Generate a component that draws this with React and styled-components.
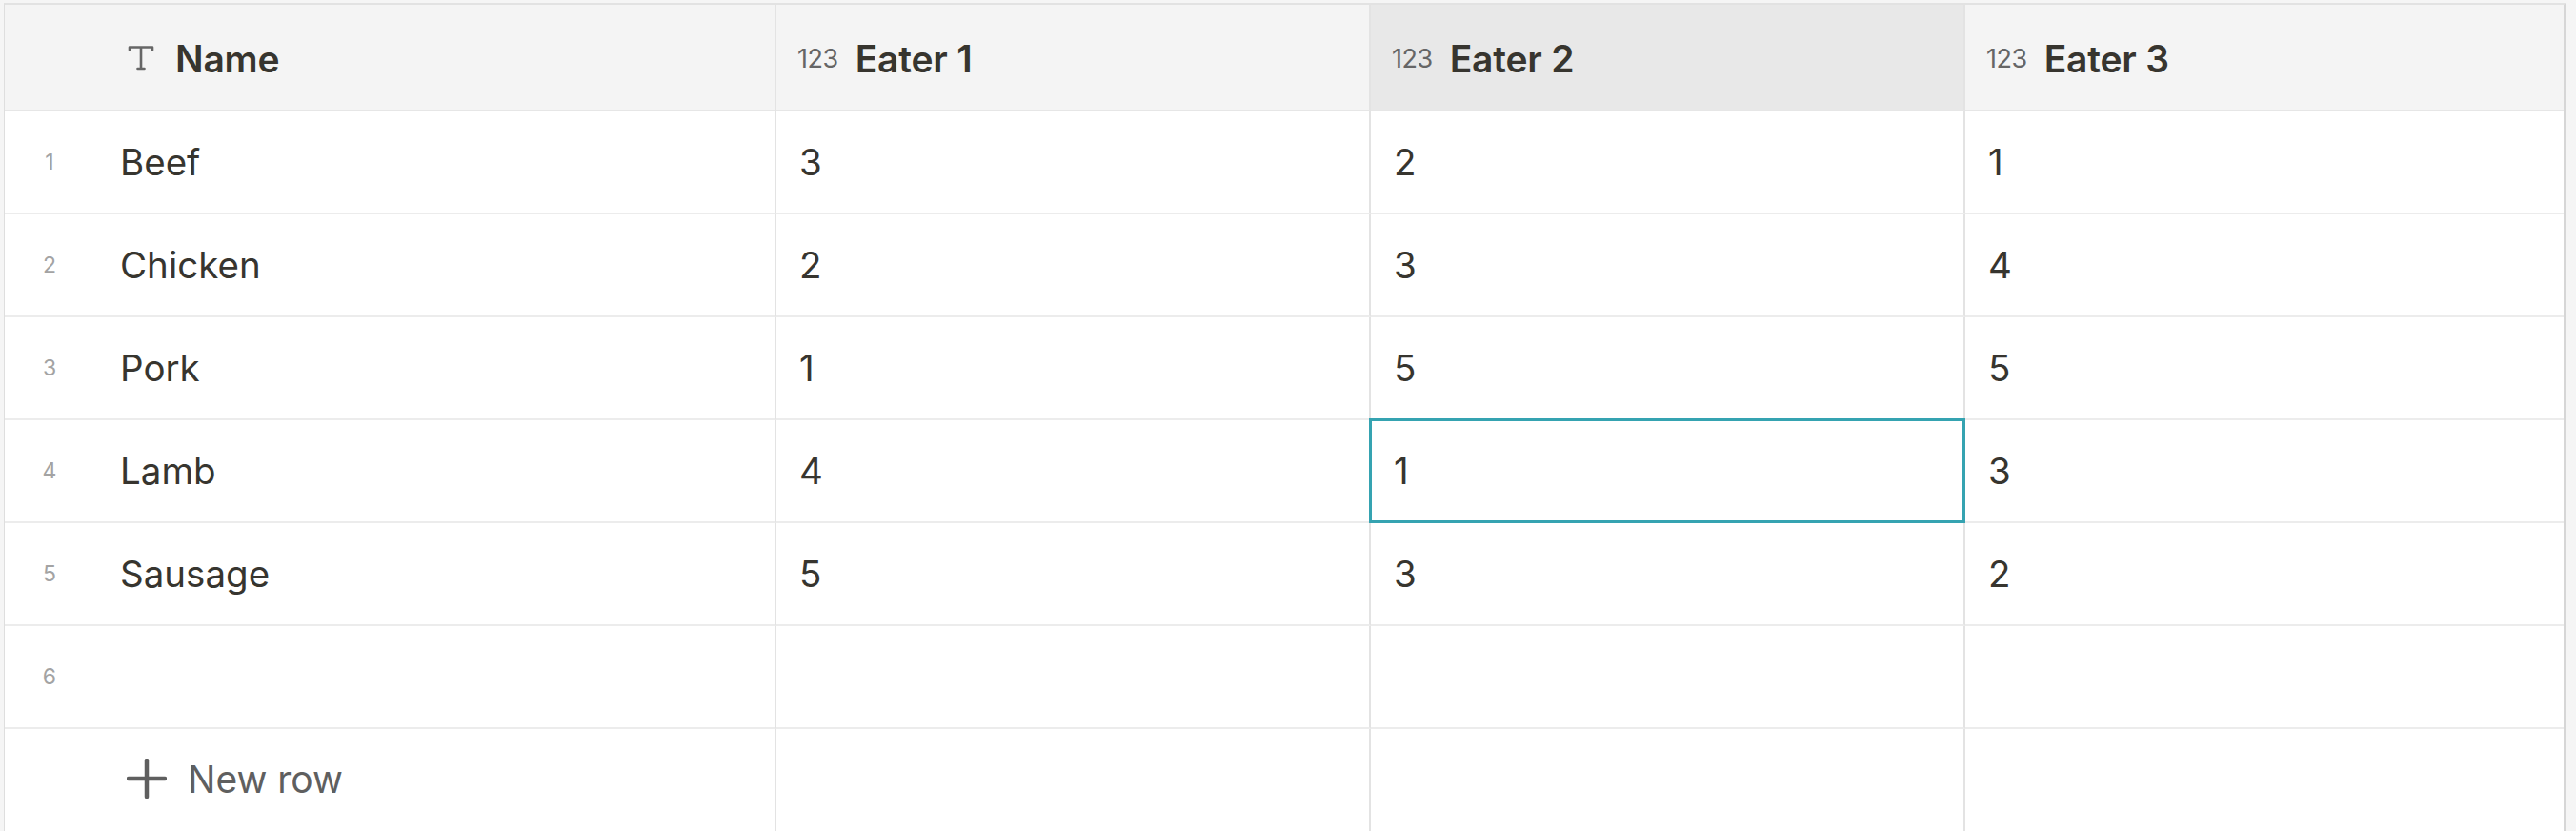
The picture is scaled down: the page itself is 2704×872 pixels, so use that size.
import styled, { createGlobalStyle } from "styled-components";

const GlobalStyle = createGlobalStyle`
  body {
    margin: 0;
    background: #f5f5f5;
    font-family: Inter, "Noto Sans", sans-serif;
  }
`;

const columns = ["Eater 1", "Eater 2", "Eater 3"];

const rows = [
  { name: "Beef", values: [3, 2, 1] },
  { name: "Chicken", values: [2, 3, 4] },
  { name: "Pork", values: [1, 5, 5] },
  { name: "Lamb", values: [4, 1, 3] },
  { name: "Sausage", values: [5, 3, 2] },
  { name: "", values: ["", "", ""] },
];

// selected cell: row 4, Eater 2
const selected = { row: 3, col: 1 };

function TextIcon() {
  return (
    <svg width="30" height="30" viewBox="0 0 30 30" fill="none">
      <path
        d="M3 6.5 V3.5 H27 V6.5 M15 3.5 V26 M11.5 26 H18.5"
        stroke="#666666"
        strokeWidth="2.6"
        strokeLinecap="round"
        strokeLinejoin="round"
      />
    </svg>
  );
}

function PlusIcon() {
  return (
    <svg width="42" height="42" viewBox="0 0 42 42" fill="none">
      <path
        d="M21 2 V40 M2 21 H40"
        stroke="#5f5f5f"
        strokeWidth="4.5"
        strokeLinecap="round"
      />
    </svg>
  );
}

export default function App() {
  return (
    <>
      <GlobalStyle />
      <Page>
        <Table>
          <HeadCell>
            <NameHead>
              <TextIcon />
              <HeadLabel>Name</HeadLabel>
            </NameHead>
          </HeadCell>
          {columns.map((c, i) => (
            <HeadCell key={c} $active={i === 1} $last={i === columns.length - 1}>
              <NumTag>123</NumTag>
              <HeadLabel>{c}</HeadLabel>
            </HeadCell>
          ))}

          {rows.map((r, ri) => (
            <Row key={ri}>
              <NameCell>
                <Index>{ri + 1}</Index>
                <NameText>{r.name}</NameText>
              </NameCell>
              {r.values.map((v, ci) => (
                <Cell
                  key={ci}
                  $last={ci === r.values.length - 1}
                  $selected={ri === selected.row && ci === selected.col}
                >
                  {v}
                </Cell>
              ))}
            </Row>
          ))}

          <FootRow>
            <NewRow>
              <PlusIcon />
              <span>New row</span>
            </NewRow>
            <Cell $foot />
            <Cell $foot />
            <Cell $foot $last />
          </FootRow>
        </Table>
      </Page>
    </>
  );
}

const Page = styled.div`
  padding: 3px 10px 0 4px;
  height: 872px;
  box-sizing: border-box;
  overflow: hidden;
`;

const Table = styled.div`
  display: grid;
  grid-template-columns: 810px 624px 624px 1fr;
  grid-auto-rows: 108px;
  grid-template-rows: 112px;
  background: #ffffff;
  border-top: 2px solid #e2e2e2;
  border-left: 1px solid #dedede;
  border-right: 3px solid #d6d6d6;
  border-bottom: 2px solid #e2e2e2;
  color: #37352f;
`;

const HeadCell = styled.div`
  display: flex;
  align-items: center;
  gap: 18px;
  padding-left: 22px;
  padding-top: 2px;
  box-sizing: border-box;
  background: ${(p) => (p.$active ? "#e8e8e8" : "#f4f4f4")};
  border-right: ${(p) => (p.$last ? "none" : "2px solid #e3e3e3")};
  border-bottom: 2px solid #e6e6e6;
`;

const NameHead = styled.div`
  display: flex;
  align-items: center;
  gap: 21px;
  padding-left: 106px;
`;

const HeadLabel = styled.span`
  font-size: 39px;
  font-weight: 600;
  color: #37352f;
  letter-spacing: -0.2px;
`;

const NumTag = styled.span`
  font-size: 27px;
  color: #666666;
  letter-spacing: -0.5px;
`;

const Row = styled.div`
  display: contents;
`;

const FootRow = styled.div`
  display: contents;
`;

const NameCell = styled.div`
  display: flex;
  align-items: center;
  box-sizing: border-box;
  border-right: 2px solid #e3e3e3;
  border-bottom: 2px solid #ececec;
`;

const Index = styled.span`
  width: 94px;
  text-align: center;
  font-size: 23px;
  color: #a3a3a3;
`;

const NameText = styled.span`
  margin-left: 27px;
  font-size: 38.5px;
  color: #37352f;
`;

const Cell = styled.div`
  position: relative;
  display: flex;
  align-items: center;
  padding-left: 24px;
  box-sizing: border-box;
  font-size: 38.5px;
  color: #37352f;
  border-right: ${(p) => (p.$last ? "none" : "2px solid #e3e3e3")};
  border-bottom: ${(p) => (p.$foot ? "none" : "2px solid #ececec")};

  ${(p) =>
    p.$selected &&
    `
    &::after {
      content: "";
      position: absolute;
      top: -2px;
      left: -2px;
      right: -2px;
      bottom: -2px;
      border: 3px solid #35a3b1;
    }
  `}
`;

const NewRow = styled.div`
  display: flex;
  align-items: center;
  gap: 22px;
  padding-left: 128px;
  padding-bottom: 4px;
  font-size: 39px;
  color: #5f5f5f;
  border-right: 2px solid #e3e3e3;
`;
